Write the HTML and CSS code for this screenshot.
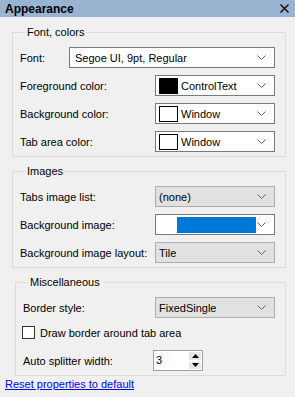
FILE: index.html
```html
<!DOCTYPE html>
<html lang="en">
<head>
    <meta charset="UTF-8">
    <title>Appearance</title>
    <link rel="stylesheet" href="styles.css">
</head>
<body>
    <div class="caption">
        <span class="caption-title">Appearance</span>
        <svg class="close" width="9" height="9" viewBox="0 0 9 9"><path d="M0.5 0.5 L8.5 8.5 M8.5 0.5 L0.5 8.5" stroke="#000" stroke-width="1.3"/></svg>
    </div>

    <fieldset class="group">
        <legend>Font, colors</legend>
        <div class="row">
            <span class="label label-font">Font:</span>
            <div class="combo combo-font">
                <span class="value">Segoe UI, 9pt, Regular</span>
                <svg class="arrow" width="9" height="5" viewBox="0 0 9 5"><path d="M0.5 0.5 L4.5 4.5 L8.5 0.5" fill="none" stroke="#606060"/></svg>
            </div>
        </div>
        <div class="row">
            <span class="label">Foreground color:</span>
            <div class="combo">
                <span class="swatch swatch-black"></span>
                <span class="value">ControlText</span>
                <svg class="arrow" width="9" height="5" viewBox="0 0 9 5"><path d="M0.5 0.5 L4.5 4.5 L8.5 0.5" fill="none" stroke="#606060"/></svg>
            </div>
        </div>
        <div class="row">
            <span class="label">Background color:</span>
            <div class="combo">
                <span class="swatch"></span>
                <span class="value">Window</span>
                <svg class="arrow" width="9" height="5" viewBox="0 0 9 5"><path d="M0.5 0.5 L4.5 4.5 L8.5 0.5" fill="none" stroke="#606060"/></svg>
            </div>
        </div>
        <div class="row">
            <span class="label">Tab area color:</span>
            <div class="combo">
                <span class="swatch"></span>
                <span class="value">Window</span>
                <svg class="arrow" width="9" height="5" viewBox="0 0 9 5"><path d="M0.5 0.5 L4.5 4.5 L8.5 0.5" fill="none" stroke="#606060"/></svg>
            </div>
        </div>
    </fieldset>

    <fieldset class="group">
        <legend>Images</legend>
        <div class="row">
            <span class="label">Tabs image list:</span>
            <div class="combo combo-flat">
                <span class="value">(none)</span>
                <svg class="arrow" width="9" height="5" viewBox="0 0 9 5"><path d="M0.5 0.5 L4.5 4.5 L8.5 0.5" fill="none" stroke="#606060"/></svg>
            </div>
        </div>
        <div class="row">
            <span class="label">Background image:</span>
            <div class="combo">
                <span class="image-bar"></span>
                <svg class="arrow" width="9" height="5" viewBox="0 0 9 5"><path d="M0.5 0.5 L4.5 4.5 L8.5 0.5" fill="none" stroke="#606060"/></svg>
            </div>
        </div>
        <div class="row">
            <span class="label">Background image layout:</span>
            <div class="combo combo-flat">
                <span class="value">Tile</span>
                <svg class="arrow" width="9" height="5" viewBox="0 0 9 5"><path d="M0.5 0.5 L4.5 4.5 L8.5 0.5" fill="none" stroke="#606060"/></svg>
            </div>
        </div>
    </fieldset>

    <fieldset class="group group-misc">
        <legend>Miscellaneous</legend>
        <div class="row">
            <span class="label">Border style:</span>
            <div class="combo combo-flat">
                <span class="value">FixedSingle</span>
                <svg class="arrow" width="9" height="5" viewBox="0 0 9 5"><path d="M0.5 0.5 L4.5 4.5 L8.5 0.5" fill="none" stroke="#606060"/></svg>
            </div>
        </div>
        <div class="check-row">
            <span class="checkbox"></span>
            <span>Draw border around tab area</span>
        </div>
        <div class="row">
            <span class="label">Auto splitter width:</span>
            <div class="spin">
                <span class="spin-value">3</span>
                <span class="spin-buttons">
                    <span class="spin-btn"><svg width="7" height="4" viewBox="0 0 7 4"><path d="M3.5 0 L7 4 L0 4 Z" fill="#000"/></svg></span>
                    <span class="spin-btn"><svg width="7" height="4" viewBox="0 0 7 4"><path d="M0 0 L7 0 L3.5 4 Z" fill="#000"/></svg></span>
                </span>
            </div>
        </div>
    </fieldset>

    <a class="reset" href="#">Reset properties to default</a>
</body>
</html>
```

FILE: styles.css
```css
body {
    margin: 0;
    width: 295px;
    height: 397px;
    background: #f0f0f0;
    font-family: "Segoe UI", "Liberation Sans", Arial, sans-serif;
    font-size: 11px;
    color: #000;
    overflow: hidden;
}

.caption {
    display: flex;
    align-items: center;
    justify-content: space-between;
    height: 17px;
    padding: 0 6px 0 5px;
    background: #99b4d1;
}

.caption-title {
    font-weight: bold;
    font-size: 12px;
}

.group {
    margin: 8px 9px 0 12px;
    padding: 8px 10px 4px 7px;
    border: 1px solid #dcdcdc;
    min-width: 0;
}

.group + .group {
    margin-top: 7px;
}

.group-misc {
    margin-left: 15px;
}

.group legend {
    padding: 0 2px;
    margin-left: 5px;
    line-height: 14px;
}

.row {
    display: flex;
    align-items: center;
    height: 21px;
}

.row + .row {
    margin-top: 7px;
}

.label {
    flex: 1;
    white-space: nowrap;
}

.label-font {
    flex: none;
    width: 49px;
}

.combo {
    display: flex;
    align-items: center;
    box-sizing: border-box;
    width: 120px;
    height: 21px;
    padding: 0 8px 0 3px;
    border: 1px solid #7a7a7a;
    background: #fff;
}

.combo-font {
    flex: 1;
    width: auto;
    padding-left: 5px;
}

.combo-flat {
    background: #e1e1e1;
    border-color: #adadad;
}

.value {
    flex: 1;
    white-space: nowrap;
}

.arrow {
    flex: none;
}

.swatch {
    box-sizing: border-box;
    width: 19px;
    height: 16px;
    margin-right: 3px;
    border: 1px solid #000;
    background: #fff;
}

.swatch-black {
    background: #000;
}

.image-bar {
    width: 79px;
    height: 16px;
    margin-left: 18px;
    margin-right: auto;
    background: #0078d7;
}

.check-row {
    display: flex;
    align-items: center;
    gap: 5px;
    height: 13px;
    margin: 8px 0 11px -1px;
}

.checkbox {
    box-sizing: border-box;
    width: 13px;
    height: 13px;
    border: 1px solid #333;
    background: #fff;
}

.spin {
    display: flex;
    box-sizing: border-box;
    width: 50px;
    height: 21px;
    margin-right: 72px;
    border: 1px solid #a0a0a0;
    background: #fff;
}

.spin-value {
    flex: 1;
    padding-left: 2px;
    line-height: 19px;
}

.spin-buttons {
    display: flex;
    flex-direction: column;
    width: 14px;
}

.spin-btn {
    flex: 1;
    display: flex;
    align-items: center;
    justify-content: center;
    background: #e6e6e6;
    border: 1px solid #fff;
}

.reset {
    display: block;
    margin: 2px 0 0 5px;
    color: #0000ff;
}
```
